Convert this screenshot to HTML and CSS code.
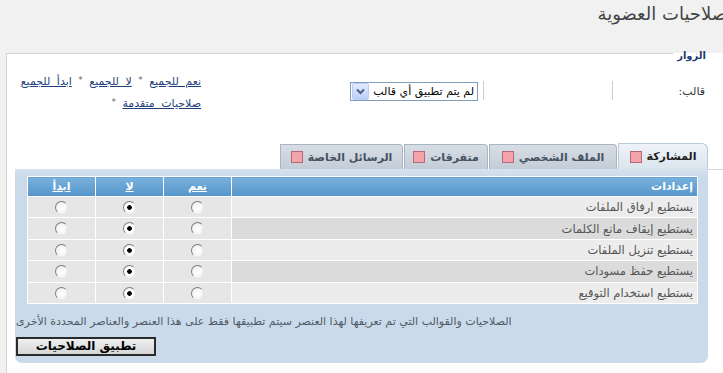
FILE: index.html
```html
<!DOCTYPE html>
<html lang="ar" dir="rtl">
<head>
<meta charset="utf-8">
<title>صلاحيات العضوية</title>
<link rel="stylesheet" href="styles.css">
</head>
<body>
<div class="page">
  <div class="header">
    <h1 class="title">صلاحيات العضوية</h1>
  </div>
  <div class="box">
    <div class="box-head">
      <span class="legend">الزوار</span>
      <span class="box-line"></span>
    </div>

    <div class="template-row">
      <div class="cell-label">قالب:</div>
      <div class="sep"></div>
      <div class="cell-empty"></div>
      <div class="sep"></div>
      <div class="cell-select">
        <div class="select">
          <span class="select-text">لم يتم تطبيق أي قالب</span>
          <span class="select-btn">
            <svg width="9" height="7" viewBox="0 0 9 7"><path d="M1 1.5 L4.5 5 L8 1.5" fill="none" stroke="#4d6185" stroke-width="2"/></svg>
          </span>
        </div>
      </div>
      <div class="cell-links">
        <div class="links-line"><a href="#" class="link">نعم للجميع</a> <span class="star">*</span> <a href="#" class="link">لا للجميع</a> <span class="star">*</span> <a href="#" class="link">ابدأ للجميع</a></div>
        <div class="links-line"><a href="#" class="link">صلاحيات متقدمة</a> <span class="star">*</span></div>
      </div>
    </div>

    <div class="tabs">
      <span class="tabs-tail"></span>
      <div class="tab tab-active tab-w1"><span class="tab-label">المشاركة</span><span class="tab-icon"></span></div>
      <div class="tab tab-w2"><span class="tab-label">الملف الشخصي</span><span class="tab-icon"></span></div>
      <div class="tab tab-w3"><span class="tab-label">متفرقات</span><span class="tab-icon"></span></div>
      <div class="tab tab-w4"><span class="tab-label">الرسائل الخاصة</span><span class="tab-icon"></span></div>
    </div>

    <div class="panel">
      <table class="perm">
        <thead>
          <tr>
            <th class="col-setting">إعدادات</th>
            <th class="col-radio"><a href="#" class="head-link">نعم</a></th>
            <th class="col-radio"><a href="#" class="head-link">لا</a></th>
            <th class="col-radio"><a href="#" class="head-link">ابدأ</a></th>
          </tr>
        </thead>
        <tbody>
          <tr class="row-odd">
            <td class="setting">يستطيع ارفاق الملفات</td>
            <td class="radio-cell"><input type="radio" name="r1" class="radio"></td>
            <td class="radio-cell"><input type="radio" name="r1" class="radio" checked></td>
            <td class="radio-cell"><input type="radio" name="r1" class="radio"></td>
          </tr>
          <tr class="row-even">
            <td class="setting">يستطيع إيقاف مانع الكلمات</td>
            <td class="radio-cell"><input type="radio" name="r2" class="radio"></td>
            <td class="radio-cell"><input type="radio" name="r2" class="radio" checked></td>
            <td class="radio-cell"><input type="radio" name="r2" class="radio"></td>
          </tr>
          <tr class="row-odd">
            <td class="setting">يستطيع تنزيل الملفات</td>
            <td class="radio-cell"><input type="radio" name="r3" class="radio"></td>
            <td class="radio-cell"><input type="radio" name="r3" class="radio" checked></td>
            <td class="radio-cell"><input type="radio" name="r3" class="radio"></td>
          </tr>
          <tr class="row-even">
            <td class="setting">يستطيع حفظ مسودات</td>
            <td class="radio-cell"><input type="radio" name="r4" class="radio"></td>
            <td class="radio-cell"><input type="radio" name="r4" class="radio" checked></td>
            <td class="radio-cell"><input type="radio" name="r4" class="radio"></td>
          </tr>
          <tr class="row-odd">
            <td class="setting">يستطيع استخدام التوقيع</td>
            <td class="radio-cell"><input type="radio" name="r5" class="radio"></td>
            <td class="radio-cell"><input type="radio" name="r5" class="radio" checked></td>
            <td class="radio-cell"><input type="radio" name="r5" class="radio"></td>
          </tr>
        </tbody>
      </table>
      <p class="note">الصلاحيات والقوالب التي تم تعريفها لهذا العنصر سيتم تطبيقها فقط على هذا العنصر والعناصر المحددة الأخرى</p>
      <button type="button" class="apply">تطبيق الصلاحيات</button>
    </div>
  </div>
</div>
</body>
</html>
```

FILE: styles.css
```css
html, body {
  margin: 0;
  padding: 0;
}
body {
  background: #f1f1f1;
  font-family: "DejaVu Sans", sans-serif;
  font-size: 11px;
  color: #333;
  overflow: hidden;
}
.page {
  width: 723px;
  height: 373px;
  overflow: hidden;
}
.header {
  height: 53px;
  overflow: hidden;
}
.title {
  margin: 0 -4px 0 0;
  padding-top: 2px;
  font-size: 18px;
  font-weight: normal;
  color: #444;
  line-height: 24px;
  white-space: nowrap;
}
.box {
  margin-left: 6px;
  border-left: 1px solid #d4d4d4;
  background: #fff;
  height: 320px;
}
.box-head {
  display: flex;
  align-items: center;
  height: 1px;
}
.legend {
  margin-right: 13px;
  padding: 0 4px;
  font-weight: bold;
  color: #1f3b6e;
  font-size: 10px;
  line-height: 12px;
  margin-top: 5px;
}
.box-line {
  flex: 1;
  height: 1px;
  background: #d0d0d0;
}

/* template row */
.template-row {
  display: flex;
  align-items: flex-start;
  margin-top: 18px;
  height: 44px;
}
.cell-label {
  width: 92px;
  padding-right: 18px;
  margin-top: 10px;
  line-height: 20px;
  color: #333;
}
.sep {
  width: 1px;
  height: 19px;
  margin-top: 9px;
  background: #cfcfcf;
}
.cell-empty {
  width: 128px;
}
.cell-select {
  margin-top: 10px;
  margin-right: 5px;
}
.select {
  display: flex;
  align-items: center;
  width: 126px;
  height: 17px;
  border: 1px solid #7f9db9;
  background: #fff;
}
.select-text {
  flex: 1;
  padding-right: 3px;
  color: #000;
  font-size: 11px;
  line-height: 17px;
  white-space: nowrap;
}
.select-btn {
  display: flex;
  align-items: center;
  justify-content: center;
  width: 15px;
  height: 15px;
  margin-left: 1px;
  border: 1px solid #bccdf3;
  border-radius: 2px;
  background: linear-gradient(#e3ebfd, #bccef7);
}
.cell-links {
  width: 190px;
  margin-right: 149px;
  font-size: 11px;
  margin-top: -1px;
}
.links-line {
  height: 22px;
  line-height: 22px;
  white-space: nowrap;
  word-spacing: 3px;
}
.link {
  color: #1f3f7a;
  text-decoration: underline;
}
.star {
  color: #666;
  font-size: 9px;
  line-height: 10px;
  vertical-align: 2px;
}

/* tabs */
.tabs {
  display: flex;
  align-items: flex-end;
  gap: 1px;
  height: 26px;
  margin-top: 27px;
}
.tabs-tail {
  width: 15px;
  height: 26px;
  margin-bottom: -1px;
  border-bottom: 1px solid #cdd5de;
  margin-left: -1px;
}
.tab {
  display: flex;
  align-items: center;
  justify-content: center;
  gap: 5px;
  box-sizing: border-box;
  height: 25px;
  border: 1px solid #a9b5c2;
  border-bottom: none;
  border-radius: 0 4px 0 0;
  background: linear-gradient(#d6dde5, #c4cdd7);
  color: #46525f;
  font-weight: bold;
  font-size: 11px;
}
.tab-active {
  height: 26px;
  border-color: #bccad8;
  border-radius: 0 6px 0 0;
  background: linear-gradient(#eef3f8, #dbe5ef);
  color: #1e1e1e;
}
.tab-w1 { width: 90px; }
.tab-w2 { width: 128px; }
.tab-w3 { width: 84px; }
.tab-w4 { width: 123px; }
.tab-icon {
  width: 10px;
  height: 10px;
  border: 1px solid #b86874;
  background: #f2a4aa;
}

/* panel */
.panel {
  display: flex;
  flex-direction: column;
  margin: 0 15px 0 8px;
  padding: 7px 0 7px 1px;
  background: linear-gradient(#d6e2ee 0, #cbdaea 8px);
  border-radius: 0 0 7px 7px;
  height: 180px;
}
.perm {
  width: 671px;
  margin: 0 10px 0 12px;
  border-collapse: collapse;
}
.perm th, .perm td {
  border: 1px solid #fff;
  padding: 0;
}
.perm th {
  height: 19px;
  background: linear-gradient(#79b1dc, #5596cb);
  color: #fff;
  font-weight: bold;
  font-size: 11px;
  text-align: center;
}
.perm th.col-setting {
  text-align: right;
  padding-right: 4px;
}
.col-radio {
  width: 67px;
}
.head-link {
  color: #fff;
  text-decoration: underline;
}
.perm td {
  height: 20.4px;
  background: #e6e6e6;
}
.setting {
  padding-right: 4px !important;
  color: #555;
  font-size: 11.5px;
  text-align: right;
}
.row-odd .setting { background: #ececec; }
.row-even .setting { background: #dbdbdb; }
.radio-cell {
  text-align: center;
}
.radio {
  appearance: none;
  -webkit-appearance: none;
  box-sizing: border-box;
  width: 13px;
  height: 13px;
  margin: 0;
  vertical-align: middle;
  border-radius: 50%;
  border: 1px solid;
  border-color: #7d7d7d #e2e2e2 #ececec #7d7d7d;
  background: radial-gradient(circle at 55% 55%, #ffffff 0, #f4f4f4 60%, #e4e4e4 100%);
}
.radio:checked {
  background: radial-gradient(circle, #000 0, #000 2px, #fff 2.6px, #f4f4f4 100%);
}
.note {
  margin: 11px 0 0 0;
  line-height: 14px;
  font-size: 11px;
  color: #4f5a66;
  text-align: left;
  white-space: nowrap;
}
.apply {
  align-self: flex-end;
  margin-top: 8px;
  width: 140px;
  height: 19px;
  padding: 0;
  border: 2px solid #2a2a2a;
  border-radius: 0;
  background: linear-gradient(#f0f0f0, #d6d6d6);
  font-family: "DejaVu Sans", sans-serif;
  font-size: 12px;
  line-height: 14px;
  font-weight: bold;
  color: #000;
}
```
